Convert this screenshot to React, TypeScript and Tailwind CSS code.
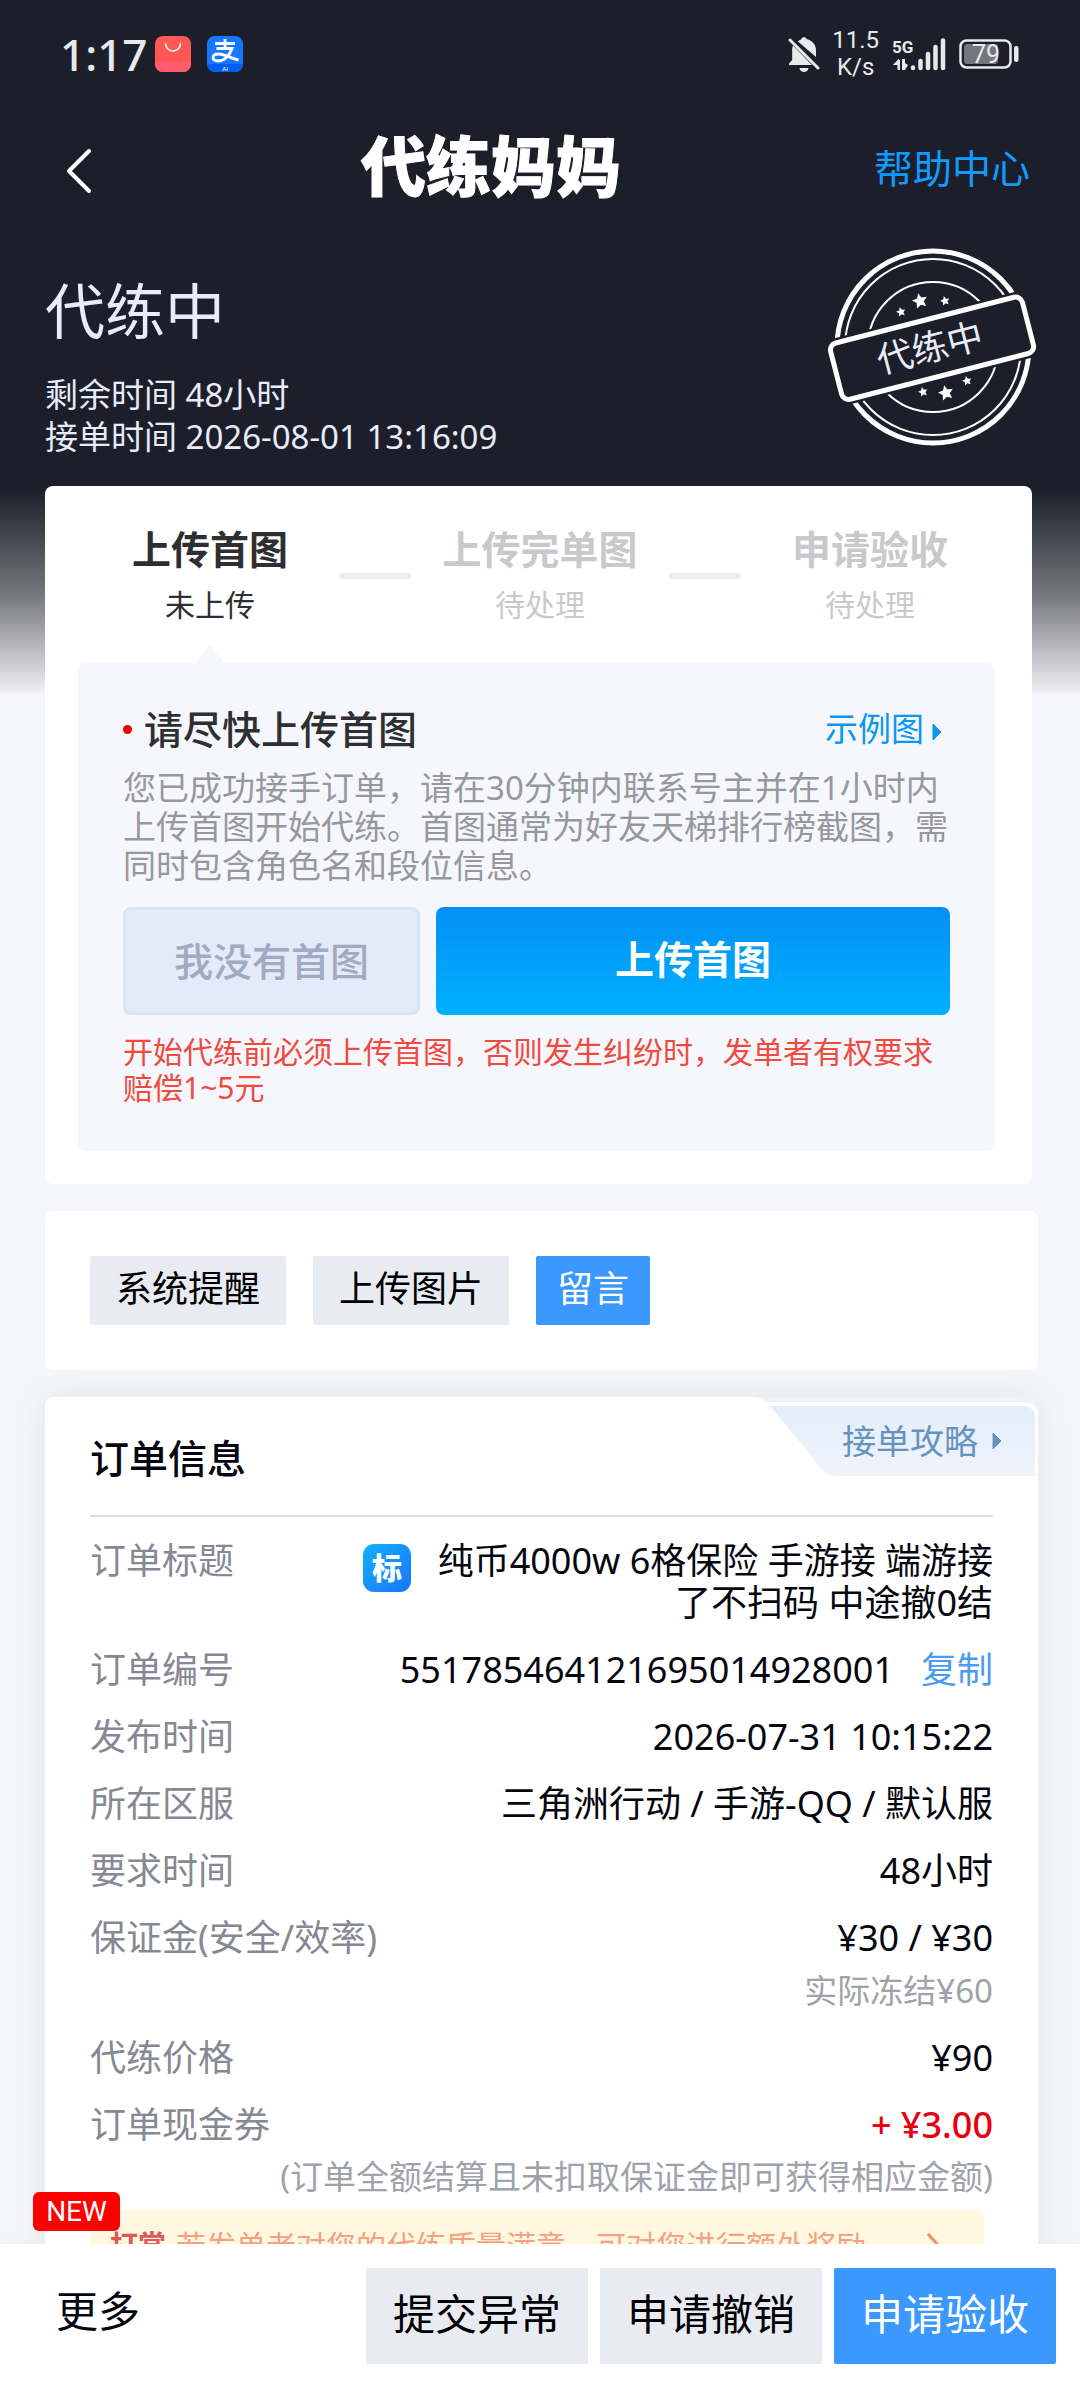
import type { ReactNode } from "react";

const star = (cx: number, cy: number, r: number, turn: number) =>
  Array.from({ length: 10 }, (_, i) => {
    const radius = i % 2 === 0 ? r : r * 0.48;
    const a = ((i * 36 - 90 + turn) * Math.PI) / 180;
    return `${(cx + radius * Math.cos(a)).toFixed(1)},${(cy + radius * Math.sin(a)).toFixed(1)}`;
  }).join(" ");

const STARS = [
  [75, 66, 5, -14],
  [94, 55, 8, -14],
  [119, 55, 5, -14],
  [97, 146, 5, -14],
  [120, 147, 8, -14],
  [141, 135, 5, -14],
];

function Stamp() {
  return (
    <svg width="214" height="204" viewBox="0 0 214 204" className="shrink-0" role="img" aria-label="代练中">
      <g fill="none" stroke="#fff">
        <circle cx="107" cy="101" r="96" strokeWidth="5" />
        <circle cx="107" cy="101" r="88" strokeWidth="2" />
        <circle cx="107" cy="101" r="65" strokeWidth="2" />
      </g>
      <g fill="#fff">
        {STARS.map(([x, y, r, t]) => (
          <polygon key={`${x}-${y}`} points={star(x, y, r, t)} />
        ))}
      </g>
      <g transform="rotate(-14.4 107 102)">
        <rect x="3" y="68" width="208" height="68" rx="9" fill="#1c1f29" />
        <rect x="7" y="73" width="198" height="58" rx="7" fill="#1c1f29" stroke="#fff" strokeWidth="5" />
        <text x="104" y="114" textAnchor="middle" fontSize="36" fill="#e8ebf8" fontFamily="'Noto Sans CJK SC', sans-serif">
          代练中
        </text>
      </g>
    </svg>
  );
}

function StatusBar() {
  return (
    <div className="flex h-[108px] items-center justify-between px-[60px] text-[#e8e9ec]">
      <div className="flex items-center">
        <span className="w-[95px] text-[44px] leading-[54px] font-medium">1:17</span>
        <svg width="36" height="36" viewBox="0 0 36 36">
          <rect width="36" height="36" rx="8" fill="#ff5656" />
          <path d="M0 26h36v2a8 8 0 0 1-8 8H8a8 8 0 0 1-8-8z" fill="#ff5c6c" />
          <path d="M10.5 7.5a7.5 7.5 0 0 0 15 0" fill="none" stroke="#fff" strokeWidth="1.5" strokeLinecap="round" />
        </svg>
        <svg width="36" height="36" viewBox="0 0 36 36" className="ml-4">
          <rect width="36" height="36" rx="8" fill="#1677ff" />
          <path d="M0 28h36a8 8 0 0 1-8 8H8a8 8 0 0 1-8-8z" fill="#075ef5" />
          <path
            d="M8 7.5h20M18 3v9M9.5 12.5h15.5c-2 6-7 12.5-14 12.5-7 0-6.5-7 .5-7 7 0 12 4.500 20 6"
            fill="none"
            stroke="#fff"
            strokeWidth="2.8"
          />
          <text x="18" y="35" textAnchor="middle" fontSize="6" fill="#fff" fontFamily="Roboto, sans-serif">
            AI
          </text>
        </svg>
      </div>
      <div className="flex items-center">
        <svg width="32" height="36" viewBox="0 0 32 36" fill="#e8e9ec">
          <path d="M10 5.5C11 4 13 3.5 13.5 3c0-2.500 5-2.500 5 0C25 5 28 9 28 14v7z" />
          <path d="M5 9.5C4 12 4.200 13 4.200 16v8L1 27.500V29h23z" />
          <path d="M11.5 32h9a4.500 4 0 0 1-9 0z" />
          <path d="M2 4l28 28" stroke="#e8e9ec" strokeWidth="3" strokeLinecap="round" />
        </svg>
        <div className="mr-3.5 ml-3 text-center font-['Roboto',sans-serif] text-[24px] leading-[27px]">
          <div>11.5</div>
          <div>K/s</div>
        </div>
        <svg width="54" height="36" viewBox="0 0 54 36" fill="#e8e9ec">
          <text x="-1" y="17" fontSize="17" fontWeight="700" fontFamily="Roboto, sans-serif">
            5G
          </text>
          <path d="M4.5 24v10h2.500V24L5.500 23 0 29h4.500zM9 23h3v4l3 2-3 5H9z" />
          <path
            d="M20 31.5v.5M27.500 25v7M35 18v14M42.500 11v21M50 4.500v27.500"
            stroke="#e8e9ec"
            strokeWidth="4.5"
            strokeLinecap="round"
          />
        </svg>
        <svg width="61" height="30" viewBox="0 0 61 30" className="ml-3">
          <rect x="1.5" y="1.5" width="50" height="27" rx="6" fill="none" stroke="#e8e9ec" strokeWidth="2.5" />
          <rect x="5" y="5" width="34" height="20" rx="3" fill="#74767d" />
          <rect x="55" y="7" width="4.5" height="16" rx="2.2" fill="#e8e9ec" />
          <text x="27" y="24" textAnchor="middle" fontSize="25" fill="#e8e9ec" fontFamily="Roboto, sans-serif">
            79
          </text>
        </svg>
      </div>
    </div>
  );
}

function Caret({ className }: { className: string }) {
  return (
    <svg width="10" height="18" viewBox="0 0 10 18" fill="currentColor" className={className}>
      <path d="M1 1l8 8-8 8z" stroke="currentColor" strokeWidth="1" strokeLinejoin="round" />
    </svg>
  );
}

function Step({ title, state, active }: { title: string; state: string; active?: boolean }) {
  return (
    <li className={active ? "flex-1 text-center text-[#2f2f31]" : "flex-1 text-center text-[#c9c9cb]"}>
      <div className="text-[39px] leading-[54px] font-bold whitespace-nowrap">{title}</div>
      <div className="mt-2 text-[30px] leading-[42px]">{state}</div>
    </li>
  );
}

function Row({ label, children }: { label: string; children: ReactNode }) {
  return (
    <div className="flex justify-between">
      <dt className="shrink-0 text-[#868893]">{label}</dt>
      <dd className="text-right">{children}</dd>
    </div>
  );
}

export default function App() {
  return (
    <div className="flex h-screen flex-col bg-[#f4f6fb] font-['Noto_Sans','Noto_Sans_CJK_SC',sans-serif] text-[#05060f]">
      <main className="min-h-0 flex-1 overflow-y-auto bg-[linear-gradient(to_bottom,#1c1f29_490px,#77787f_595px,#efeff2_692px,#f4f6fb_693px)] [scrollbar-width:none]">
        <header className="text-white">
          <StatusBar />
          <nav className="flex h-[124px] items-center justify-between pr-[50px] pl-[60px]">
            <button aria-label="返回" className="w-12">
              <svg width="38" height="48" viewBox="0 0 38 48" fill="none" stroke="#fff" strokeWidth="4" strokeLinecap="round" strokeLinejoin="round">
                <path d="M29 5L9 25l20 20" />
              </svg>
            </button>
            <h1 className="pb-2 text-center text-[65px] leading-[80px] font-black whitespace-nowrap [-webkit-text-stroke:1px_white]">代练妈妈</h1>
            <a href="#help" className="pb-1 text-right text-[39px] leading-[54px] text-[#119bff]">
              帮助中心
            </a>
          </nav>
          <div className="flex items-start justify-between pt-[14px] pr-[40px] pb-7 pl-[45px] text-[#e8ebf8]">
            <div>
              <h2 className="mt-[29px] text-[60px] leading-[72px]">代练中</h2>
              <p className="mt-[27px] text-[33px] leading-[42px]">
                剩余时间 48小时
                <br />
                接单时间 2026-08-01 13:16:09
              </p>
            </div>
            <Stamp />
          </div>
        </header>

        <section className="mr-[48px] ml-[45px] rounded-lg bg-white pt-9 pb-[33px]">
          <ol className="flex items-center pr-[33px] pl-9">
            <Step title="上传首图" state="未上传" active />
            <li aria-hidden="true" className="mt-1 h-1.5 w-[72px] bg-[#eeeeef]" />
            <Step title="上传完单图" state="待处理" />
            <li aria-hidden="true" className="mt-1 h-1.5 w-[72px] bg-[#eeeeef]" />
            <Step title="申请验收" state="待处理" />
          </ol>
          <div className="relative mt-[37px] mr-[37px] ml-[33px] rounded-lg bg-[#f6f7fc] px-[45px] pt-[39px] pb-[45px]">
            <svg width="30" height="19" viewBox="0 0 30 19" className="absolute -top-[18px] left-[117px]">
              <path d="M0 19L15 0l15 19z" fill="#f6f7fc" />
            </svg>
            <div className="flex items-center justify-between">
              <h3 className="flex items-center gap-3 text-[39px] leading-[54px] font-medium text-[#2f2f31]">
                <span className="size-[9px] rounded-full bg-[#ee0000]" />
                请尽快上传首图
              </h3>
              <a href="#example" className="flex items-center text-[33px] leading-[54px] text-[#0997f0]">
                示例图
                <Caret className="mt-1.5 mr-2 ml-2" />
              </a>
            </div>
            <p className="mt-3 text-[33px] leading-[39px] text-[#97989b]">
              您已成功接手订单，请在30分钟内联系号主并在1小时内上传首图开始代练。首图通常为好友天梯排行榜截图，需同时包含角色名和段位信息。
            </p>
            <div className="mt-[22px] flex gap-4">
              <button className="h-[108px] w-[297px] rounded-lg border-3 border-[#d8e5f2] bg-[#e3eaf8] text-[39px] font-medium text-[#a0aac3]">
                我没有首图
              </button>
              <button className="h-[108px] flex-1 rounded-lg bg-linear-to-b from-[#0490f2] to-[#00b0ff] pb-1 text-[39px] font-bold text-white">
                上传首图
              </button>
            </div>
            <p className="mt-[19px] text-[30px] leading-9 text-[#f04a3f]">
              开始代练前必须上传首图，否则发生纠纷时，发单者有权要求赔偿1~5元
            </p>
          </div>
        </section>

        <section className="mt-[27px] mr-[42px] ml-[45px] flex gap-[27px] rounded-lg bg-white p-[45px] text-[36px]">
          <button className="h-[69px] rounded-xs bg-[#e9ebf3] px-[26px] pb-1 text-black">系统提醒</button>
          <button className="h-[69px] rounded-xs bg-[#e9ebf3] px-[26px] pb-1 text-black">上传图片</button>
          <button className="h-[69px] rounded-xs bg-[#3a98ff] px-[21px] pb-1 text-white">留言</button>
        </section>

        <section className="relative mt-[27px] mr-[42px] ml-[45px] rounded-lg bg-white px-[45px] pt-[34px] pb-[45px] shadow-[0_0_36px_rgba(30,30,60,0.07)]">
          <a href="#guide" className="absolute top-0 right-0 block h-[84px] w-[290px] text-[34px] text-[#6593bd]">
            <svg width="290" height="84" viewBox="0 0 290 84" className="absolute inset-0">
              <defs>
                <linearGradient id="tab" x1="0" y1="0" x2="0" y2="1">
                  <stop offset="0" stopColor="#e2eefb" />
                  <stop offset="1" stopColor="#f0f3fa" />
                </linearGradient>
              </defs>
              <path d="M0 0c12 0 18 3 22 8h258a8 8 0 0 1 10 8V0z" fill="#f1f2f6" />
              <path d="M14 5h264a12 12 0 0 1 12 12v6H18z" fill="#fff" />
              <path d="M22 9h254a11 11 0 0 1 11 11v59H91c-13 0-19-6-25-17z" fill="url(#tab)" />
            </svg>
            <span className="relative ml-[94px] flex h-[88px] items-center">
              接单攻略
              <Caret className="ml-3.5" />
            </span>
          </a>
          <h3 className="text-[39px] leading-[54px] font-medium">订单信息</h3>
          <hr className="mt-[30px] h-0.5 border-0 bg-[#dcdde1]" />
          <dl className="mt-[23px] flex flex-col gap-[25px] text-[36px] leading-[42px]">
            <Row label="订单标题">
              <span className="flex items-start gap-3">
                <svg width="48" height="48" viewBox="0 0 48 48" className="mt-1 shrink-0">
                  <defs>
                    <linearGradient id="mark" x1="0" y1="0" x2="1" y2="1">
                      <stop offset="0" stopColor="#12b0ff" />
                      <stop offset="1" stopColor="#1b74fb" />
                    </linearGradient>
                  </defs>
                  <rect width="48" height="48" rx="11" fill="url(#mark)" />
                  <text x="24" y="35" textAnchor="middle" fontSize="30" fontWeight="900" fill="#fff" fontFamily="'Noto Sans CJK SC', sans-serif">
                    标
                  </text>
                </svg>
                <span className="w-[570px]">纯币4000w 6格保险 手游接 端游接了不扫码 中途撤0结</span>
              </span>
            </Row>
            <Row label="订单编号">
              551785464121695014928001
              <button className="ml-[27px] text-[#4a9bf0]">复制</button>
            </Row>
            <Row label="发布时间">2026-07-31 10:15:22</Row>
            <Row label="所在区服">三角洲行动 / 手游-QQ / 默认服</Row>
            <Row label="要求时间">48小时</Row>
            <Row label="保证金(安全/效率)">
              ¥30 / ¥30
              <div className="mt-[11px] text-[33px] text-[#a0a2a9]">实际冻结¥60</div>
            </Row>
            <Row label="代练价格">¥90</Row>
            <Row label="订单现金券">
              <span className="font-medium text-[#e60012]">+ ¥3.00</span>
            </Row>
          </dl>
          <p className="mt-[10px] text-right text-[33px] leading-[42px] text-[#a0a2a9]">(订单全额结算且未扣取保证金即可获得相应金额)</p>
          <a href="#reward" className="relative mt-3 mr-[9px] flex h-[70px] items-center rounded-lg bg-[#fff7e0] pr-11 pl-5 text-[30px] text-[#f5a283]">
            <strong className="mr-2.5 text-[28px] font-bold text-[#e0595a]">打赏</strong>
            若发单者对您的代练质量满意，可对您进行额外奖励
            <svg width="14" height="26" viewBox="0 0 14 26" fill="none" stroke="#f0906a" strokeWidth="3" className="ml-auto">
              <path d="M2 2l10 11L2 24" />
            </svg>
            <span className="absolute -top-[18px] -left-[57px] h-[39px] w-[87px] rounded-md bg-[#ff0000] text-center font-['Roboto',sans-serif] text-[28px] leading-[40px] text-white">
              NEW
            </span>
          </a>
        </section>
      </main>

      <footer className="flex items-center gap-3 bg-white px-6 py-6 text-[42px] shadow-[0_0_12px_rgba(0,0,0,0.03)]">
        <button className="mr-auto ml-8 pb-3">更多</button>
        <button className="h-24 w-[222px] rounded-xs bg-[#e9ebf3] pb-1.5 text-black">提交异常</button>
        <button className="h-24 w-[222px] rounded-xs bg-[#e9ebf3] pb-1.5 text-black">申请撤销</button>
        <button className="h-24 w-[222px] rounded-xs bg-[#3a98ff] pb-1.5 text-white">申请验收</button>
      </footer>
    </div>
  );
}
